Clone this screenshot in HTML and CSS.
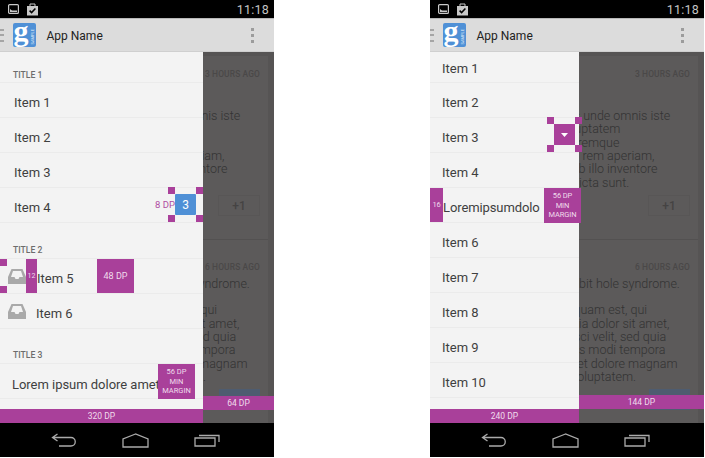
FILE: index.html
```html
<!DOCTYPE html>
<html lang="en">
<head>
<meta charset="utf-8">
<title>Navigation drawer metrics</title>
<link rel="stylesheet" href="styles.css">
</head>
<body>
<main class="stage">

<section class="phone">
  <header class="status">
    <svg class="st-icon" width="11" height="10" viewBox="0 0 11 10"><rect x="0.6" y="0.6" width="9.8" height="8.8" rx="1" fill="none" stroke="#c8c8c8" stroke-width="1.2"/><path d="M2 5l2 1.6h5v1.4H2z" fill="#c8c8c8"/></svg>
    <svg class="st-icon" width="13" height="13" viewBox="0 0 13 13"><rect x="1" y="3" width="11" height="9.5" fill="#c8c8c8"/><path d="M4 3V1h5v2" fill="none" stroke="#c8c8c8"/><path d="M3.6 7.6l2 2 3.8-4" fill="none" stroke="#000" stroke-width="1.5"/></svg>
    <span class="time">11:18</span>
  </header>
  <header class="actionbar">
    <div class="burger"><i></i><i></i><i></i></div>
    <div class="logo"><span class="logo-g">g</span><span class="logo-s">SAMPLE</span></div>
    <span class="appname">App Name</span>
    <div class="overflow"><i></i><i></i><i></i></div>
  </header>
  <div class="content">
    <div class="backdrop">
      <article class="card card-a">
        <div class="card-head"><h2>San Francisco</h2><span class="ago">3 HOURS AGO</span></div>
        <p class="copy">Sed ut perspiciatis unde omnis iste<br>natus error sit voluptatem<br>accusantium doloremque<br>laudantium, totam rem aperiam,<br>eaque ipsa quae ab illo inventore<br>veritatis et quasi dicta sunt.</p>
        <div class="btn-row"><span class="plus">+1</span></div>
      </article>
      <article class="card card-b">
        <div class="card-head"><h2>&nbsp;</h2><span class="ago">6 HOURS AGO</span></div>
        <p class="copy">I just fell into a rabbit hole syndrome.</p>
        <p class="copy copy-next">Neque porro quisquam est, qui<br>dolorem ipsum quia dolor sit amet,<br>consectetur adipisci velit, sed quia<br>non numquam eius modi tempora<br>incidunt ut labore et dolore magnam<br>aliquam quaerat voluptatem.</p>
        <div class="btn-row"><span class="blue-btn"></span></div>
      </article>
    </div>

    <nav class="drawer drawer-wide">
      <div class="section section-one">TITLE 1</div>
      <div class="row">Item 1</div>
      <div class="row">Item 2</div>
      <div class="row">Item 3</div>
      <div class="row">Item 4
        <span class="dp8">8 DP</span>
        <span class="sq sq-a"></span><span class="sq sq-b"></span><span class="sq sq-c"></span><span class="sq sq-d"></span>
        <span class="count">3</span>
      </div>
      <div class="section section-tall">TITLE 2</div>
      <div class="row row-icon row-five">
        <svg class="inbox" width="18" height="15" viewBox="0 0 18 15"><path d="M3.5 0h11L18 8v7H0V8zM5 2L3 8h3.5l1 2h3l1-2H15l-2-6z" fill="#a9a9a9" fill-rule="evenodd"/></svg>
        Item 5
        <span class="sq sq-e"></span><span class="sq sq-f"></span>
        <span class="mark mark-12">12</span>
        <span class="mark mark-48">48 DP</span>
      </div>
      <div class="row row-icon">
        <svg class="inbox" width="18" height="15" viewBox="0 0 18 15"><path d="M3.5 0h11L18 8v7H0V8zM5 2L3 8h3.5l1 2h3l1-2H15l-2-6z" fill="#a9a9a9" fill-rule="evenodd"/></svg>
        Item 6
      </div>
      <div class="section">TITLE 3</div>
      <div class="row row-long">Lorem ipsum dolore amet
        <span class="mark mark-56 mark-56-a">56 DP<br>MIN<br>MARGIN</span>
      </div>
    </nav>
    <div class="rule rule-320">320 DP</div>
    <div class="rule rule-64">64 DP</div>
  </div>
  <footer class="navbar">
    <svg width="26" height="14" viewBox="0 0 26 14" fill="none" stroke="#aaa" stroke-width="1.3"><path d="M6.5 1L1.5 4.5 6.5 8M1.5 4.5H20a4 4 0 0 1 0 8.5H8"/></svg>
    <svg width="27" height="15" viewBox="0 0 27 15" fill="none" stroke="#aaa" stroke-width="1.3"><path d="M13.5 1L1 6v8h25V6z"/></svg>
    <svg width="26" height="14" viewBox="0 0 26 14" fill="none" stroke="#aaa" stroke-width="1.3"><path d="M1 5h20v8H1zM5 2.5h20V9"/></svg>
  </footer>
</section>

<section class="phone">
  <header class="status">
    <svg class="st-icon" width="11" height="10" viewBox="0 0 11 10"><rect x="0.6" y="0.6" width="9.8" height="8.8" rx="1" fill="none" stroke="#c8c8c8" stroke-width="1.2"/><path d="M2 5l2 1.6h5v1.4H2z" fill="#c8c8c8"/></svg>
    <svg class="st-icon" width="13" height="13" viewBox="0 0 13 13"><rect x="1" y="3" width="11" height="9.5" fill="#c8c8c8"/><path d="M4 3V1h5v2" fill="none" stroke="#c8c8c8"/><path d="M3.6 7.6l2 2 3.8-4" fill="none" stroke="#000" stroke-width="1.5"/></svg>
    <span class="time">11:18</span>
  </header>
  <header class="actionbar">
    <div class="burger"><i></i><i></i><i></i></div>
    <div class="logo"><span class="logo-g">g</span><span class="logo-s">SAMPLE</span></div>
    <span class="appname">App Name</span>
    <div class="overflow"><i></i><i></i><i></i></div>
  </header>
  <div class="content">
    <div class="backdrop">
      <article class="card card-a">
        <div class="card-head"><h2>San Francisco</h2><span class="ago">3 HOURS AGO</span></div>
        <p class="copy">Sed ut perspiciatis unde omnis iste<br>natus error sit voluptatem<br>accusantium doloremque<br>laudantium, totam rem aperiam,<br>eaque ipsa quae ab illo inventore<br>veritatis et quasi dicta sunt.</p>
        <div class="btn-row"><span class="plus">+1</span></div>
      </article>
      <article class="card card-b">
        <div class="card-head"><h2>&nbsp;</h2><span class="ago">6 HOURS AGO</span></div>
        <p class="copy">I just fell into a rabbit hole syndrome.</p>
        <p class="copy copy-next">Neque porro quisquam est, qui<br>dolorem ipsum quia dolor sit amet,<br>consectetur adipisci velit, sed quia<br>non numquam eius modi tempora<br>incidunt ut labore et dolore magnam<br>aliquam quaerat voluptatem.</p>
        <div class="btn-row"><span class="blue-btn"></span></div>
      </article>
    </div>

    <nav class="drawer drawer-narrow">
      <div class="row row-first">Item 1</div>
      <div class="row">Item 2</div>
      <div class="row">Item 3
        <span class="sq sq-g"></span><span class="sq sq-h"></span><span class="sq sq-i"></span><span class="sq sq-j"></span>
        <span class="spinner"><svg width="7" height="4" viewBox="0 0 7 4"><path d="M0 0h7L3.5 4z" fill="#fff"/></svg></span>
      </div>
      <div class="row">Item 4</div>
      <div class="row row-lorem">Loremipsumdolo
        <span class="mark mark-16">16</span>
        <span class="mark mark-56 mark-56-b">56 DP<br>MIN<br>MARGIN</span>
      </div>
      <div class="row">Item 6</div>
      <div class="row">Item 7</div>
      <div class="row">Item 8</div>
      <div class="row">Item 9</div>
      <div class="row">Item 10</div>
    </nav>
    <div class="rule rule-240">240 DP</div>
    <div class="rule rule-144">144 DP</div>
  </div>
  <footer class="navbar">
    <svg width="26" height="14" viewBox="0 0 26 14" fill="none" stroke="#aaa" stroke-width="1.3"><path d="M6.5 1L1.5 4.5 6.5 8M1.5 4.5H20a4 4 0 0 1 0 8.5H8"/></svg>
    <svg width="27" height="15" viewBox="0 0 27 15" fill="none" stroke="#aaa" stroke-width="1.3"><path d="M13.5 1L1 6v8h25V6z"/></svg>
    <svg width="26" height="14" viewBox="0 0 26 14" fill="none" stroke="#aaa" stroke-width="1.3"><path d="M1 5h20v8H1zM5 2.5h20V9"/></svg>
  </footer>
</section>

</main>
</body>
</html>
```

FILE: styles.css
```css
* { box-sizing: border-box; }
html, body { margin: 0; padding: 0; background: #fff; overflow: hidden; }
body { font-family: Roboto, "Liberation Sans", sans-serif; }

.stage { display: flex; gap: 156px; width: 705px; height: 458px; }
.phone { width: 274px; height: 457px; display: flex; flex-direction: column; overflow: hidden; }

/* status bar */
.status { height: 18px; background: #000; display: flex; align-items: center; gap: 7px; padding: 0 5px 0 8px; }
.st-icon { display: block; }
.time { margin-left: auto; padding-top: 1px; color: #c4c4c4; font-size: 12.5px; letter-spacing: 0.2px; }

/* action bar */
.actionbar { height: 34px; background: #dcdcdc; border-top: 1px solid #b8b8b8; border-bottom: 1px solid #cfcfcf; display: flex; align-items: center; position: relative; }
.burger { width: 12.5px; display: flex; flex-direction: column; gap: 3.5px; }
.burger i { display: block; width: 4px; height: 2px; background: #a5a5a5; }
.logo { width: 23.5px; height: 23.5px; border-radius: 2px; background: #4f90d6; position: relative; }
.logo-g { position: absolute; left: 1px; top: -6px; font: bold 30px/28px "Liberation Serif", serif; color: #fff; }
.logo-s { position: absolute; right: 1px; bottom: 2px; font-size: 4px; line-height: 4px; color: #dbe8f7; writing-mode: vertical-rl; transform: rotate(180deg); }
.appname { margin-left: 10.5px; padding-top: 2px; font-size: 12px; color: #222; }
.overflow { margin-left: auto; margin-right: 20px; display: flex; flex-direction: column; gap: 3px; }
.overflow i { display: block; width: 3px; height: 3px; background: #9c9c9c; }

/* content */
.content { height: 371px; position: relative; background: #565454; overflow: hidden; }

.backdrop { display: flex; flex-direction: column; padding: 4px 6px 0 0; height: 100%; }
.card { background: #5c5a5a; padding-left: 49.5px; padding-right: 8px; color: #333; }
.card-a { height: 184px; padding-top: 10px; border-bottom: 1px solid #535151; }
.card-b { flex: 1; padding-top: 19px; }
.card-head { display: flex; justify-content: space-between; align-items: center; height: 16px; }
.card-head h2 { margin: 0; font-size: 13px; font-weight: 500; color: #333; }
.ago { font-size: 8.4px; font-weight: 500; color: #4a4848; letter-spacing: 0.15px; }
.copy { margin: 27px 0 0; font-size: 12.5px; line-height: 13.35px; font-weight: 300; white-space: nowrap; }
.card-b .copy { margin-top: 2px; }
.card-b .copy-next { margin-top: 13px; }
.btn-row { display: flex; justify-content: flex-end; margin-top: 6px; }
.plus { width: 42px; height: 21px; border: 1px solid #585656; font-size: 12px; font-weight: 500; color: #454343; display: flex; align-items: center; justify-content: center; }
.blue-btn { width: 41px; height: 21px; background: #4e5c70; }

/* drawer */
.drawer { position: absolute; left: 0; top: 0; height: 357px; background: #f3f3f3; color: #3f3f3f; overflow: visible; }
.drawer-wide { width: 203px; }
.drawer-narrow { width: 149px; }
.section { height: 35px; padding: 20px 0 0 13px; font-size: 8.6px; line-height: 12px; font-weight: 500; color: #6c6c6c; border-bottom: 1.5px solid #ebebeb; }
.section-one { height: 31px; padding-top: 17px; }
.section-tall { height: 36px; padding-top: 21px; }
.row { height: 35px; display: flex; align-items: center; padding: 4px 0 0 14px; font-size: 13px; border-bottom: 1.5px solid #ebebeb; position: relative; }
.drawer-narrow .row { padding-left: 12px; }
.drawer-narrow .row-first { height: 31px; padding-top: 2px; }
.row-icon { padding-left: 36px; }
.row-five { padding-left: 37px; }
.row-long { padding: 6px 0 0 12px; letter-spacing: -0.03px; }
.drawer-narrow .row-lorem { padding-left: 13px; letter-spacing: -0.1px; }
.inbox { position: absolute; left: 8px; top: 10px; }

/* annotations */
.sq { position: absolute; width: 7px; height: 7px; background: #a9409a; }
.sq-a { left: 168px; top: -1px; }
.sq-b { left: 196px; top: -1px; }
.sq-c { left: 168px; top: 27px; }
.sq-d { left: 196px; top: 27px; }
.sq-e { left: 0; top: 0; }
.sq-f { left: 0; top: 27px; }
.sq-g { left: 117px; top: -1px; }
.sq-h { left: 145px; top: -1px; }
.sq-i { left: 117px; top: 27px; }
.sq-j { left: 145px; top: 27px; }
.dp8 { position: absolute; left: 155px; top: 11px; font-size: 9.5px; line-height: 12px; color: #b04aa2; }
.count { position: absolute; left: 175px; top: 6px; width: 21px; height: 21px; border-radius: 1px; background: #4f90d6; color: #fff; font-size: 12px; display: flex; align-items: center; justify-content: center; }
.spinner { position: absolute; left: 124px; top: 6px; width: 21px; height: 21px; background: #a9409a; display: flex; align-items: center; justify-content: center; }
.mark { position: absolute; top: 0; height: 34px; background: #a9409a; color: #f0dcec; font-size: 8.5px; line-height: 10px; text-align: center; display: flex; align-items: center; justify-content: center; }
.mark-12 { left: 26px; width: 11px; font-size: 7px; }
.mark-48 { left: 97px; width: 37px; font-size: 9px; }
.mark-16 { left: 0; width: 13px; font-size: 7.5px; }
.mark-56 { width: 37px; height: 35px; font-size: 7.5px; line-height: 9.7px; }
.mark-56-a { left: 158px; }
.mark-56-b { left: 114px; }

.rule { position: absolute; height: 14px; background: #a9409a; color: #f0dcec; font-size: 8.5px; line-height: 14px; text-align: center; }
.rule-320 { left: 0; top: 357px; width: 203px; }
.rule-64 { left: 203px; top: 344px; width: 71px; }
.rule-240 { left: 0; top: 357px; width: 149px; }
.rule-144 { left: 149px; top: 343px; width: 125px; }

/* nav bar */
.navbar { height: 34px; background: #000; display: flex; align-items: center; justify-content: space-between; padding: 0 54px 0 51px; }
```
